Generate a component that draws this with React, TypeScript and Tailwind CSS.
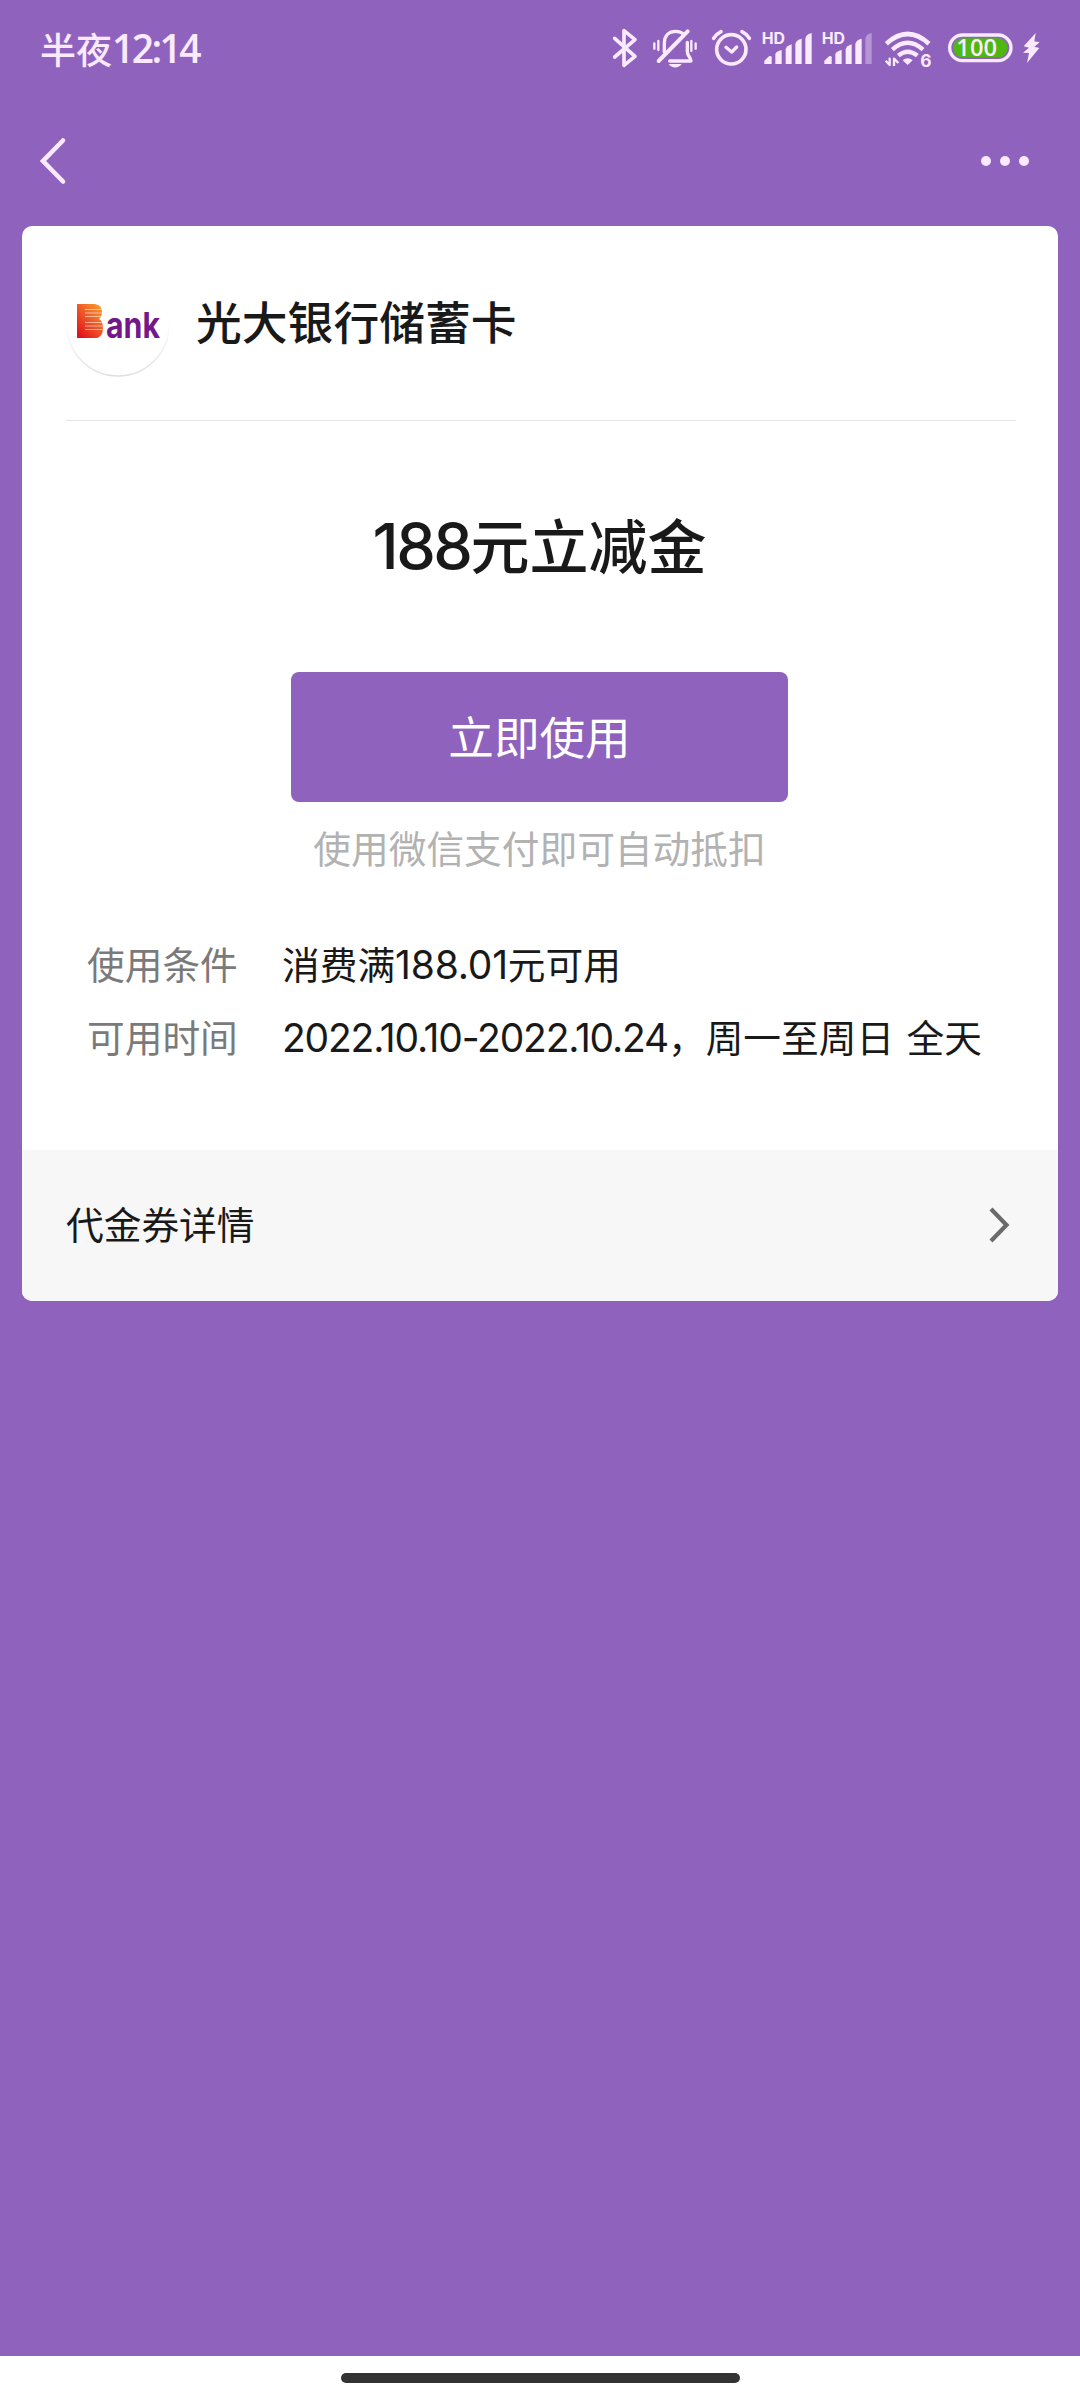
import type { ReactNode } from "react";

const INK = "#faeaff";

function StatusIcon({ x, w, children }: { x: number; w: number; children: ReactNode }) {
  return (
    <svg
      viewBox={`${x} 48 ${w} 132`}
      width={w / 3}
      height={44}
      fill="none"
      stroke={INK}
      strokeWidth={10}
      strokeLinecap="round"
      strokeLinejoin="round"
      className="shrink-0 overflow-visible"
    >
      {children}
    </svg>
  );
}

function Signal({ weak = false }: { weak?: boolean }) {
  return (
    <StatusIcon x={0} w={162}>
      <text
        x="5"
        y="101"
        fill={INK}
        stroke="none"
        fontSize="46"
        textLength="70"
        lengthAdjust="spacingAndGlyphs"
        className="font-['Inter',sans-serif] font-bold"
      >
        HD
      </text>
      <g fill={INK} stroke="none">
        <path d="M13 152l14-13q7-3 8 3v20H13z" />
        <path d="M46 132q2-8 19-12v42H46z" />
        <path d="M77 118q2-10 18-15v59H77z" />
        <path d="M106 102q2-12 19-16v76h-19z" />
        <path d="M136 86q2-13 19-17v93h-19z" opacity={weak ? 0.38 : 1} />
      </g>
    </StatusIcon>
  );
}

function StatusBar() {
  return (
    <header className="flex h-24 items-center pl-10 pr-[39px] text-[#faeaff]">
      <div className="flex items-center font-['Noto_Sans_CJK_SC',sans-serif] text-[36px] font-medium leading-[48px]">
        <span>半夜</span>
        <span className="font-['Open_Sans',sans-serif] text-[39px] font-semibold tracking-[-2.6px]">12:14</span>
      </div>
      <div className="ml-auto flex items-center">
        <StatusIcon x={60} w={90}>
          <path d="M74 85l61 54-33 27V62l33 27-61 52" strokeWidth={11} />
        </StatusIcon>
        <div className="w-2.5" />
        <StatusIcon x={180} w={150}>
          <path d="M223 127V100c0-24 14-36 34-36 12 0 20 4 26 10M292 97v28c0 12 10 17 11 28h-64" />
          <path d="M206 153l87-89" strokeWidth={12} />
          <path d="M193 100v16M205 93v27M304 93v30M317 100v16" strokeWidth={7} />
          <path d="M236 162h39c-8 14-31 14-39 0z" fill={INK} stroke="none" />
        </StatusIcon>
        <div className="w-2.5" />
        <StatusIcon x={360} w={132}>
          <circle cx="424" cy="118" r="44" strokeWidth={11} />
          <path d="M408 112l17 14 15-15" />
          <path d="M371 85q8-13 22-20M456 65q14 7 22 20" strokeWidth={11} />
        </StatusIcon>
        <div className="w-1.5" />
        <Signal />
        <div className="w-1.5" />
        <Signal weak />
        <div className="w-2.5" />
        <StatusIcon x={192} w={147}>
          <path d="M199 101q64-58 128 0" strokeWidth={14} strokeLinecap="butt" />
          <path d="M217 119q46-41 92 0" strokeWidth={13} strokeLinecap="butt" />
          <path d="M235 137q28-24 57 0" strokeWidth={13} strokeLinecap="butt" />
          <path d="M248 151q15-13 30 0l-15 14z" fill={INK} stroke="none" />
          <path d="M197 152l12 13v-22M222 168v-22l13 13" strokeWidth={7} strokeLinecap="butt" />
          <text
            x="301"
            y="170"
            fill={INK}
            stroke="none"
            fontSize="52"
            className="font-['Inter',sans-serif] font-bold"
          >
            6
          </text>
        </StatusIcon>
        <div className="w-[15px]" />
        <StatusIcon x={384} w={195}>
          <rect x="389" y="75" width="184" height="77" rx="38.5" />
          <rect x="399" y="85" width="164" height="57" rx="28.5" fill="#4fb711" stroke="none" />
          <text
            x="409"
            y="138"
            fill={INK}
            stroke="none"
            fontSize="70"
            textLength="122"
            lengthAdjust="spacingAndGlyphs"
            className="font-['Open_Sans',sans-serif] font-semibold"
          >
            100
          </text>
        </StatusIcon>
        <div className="w-2" />
        <StatusIcon x={603} w={60}>
          <path d="M647 69l-36 40 16 4-18 15 18 1-6 30 37-45-15-4 16-13-16-3z" fill={INK} stroke="none" />
        </StatusIcon>
      </div>
    </header>
  );
}

function NavBar() {
  return (
    <nav className="flex h-[130px] items-center justify-between pl-[38px] pr-[51px]">
      <svg width="30" height="50" viewBox="0 0 30 50" fill="none" stroke={INK} strokeWidth="4.6" strokeLinecap="round">
        <path d="M25 4.500L5 25l20 20.500" />
      </svg>
      <div className="flex gap-[9px]">
        <span className="size-2.5 rounded-full bg-[#faeaff]" />
        <span className="size-2.5 rounded-full bg-[#faeaff]" />
        <span className="size-2.5 rounded-full bg-[#faeaff]" />
      </div>
    </nav>
  );
}

function BankLogo() {
  return (
    <svg width="104" height="108" viewBox="0 0 104 108" className="shrink-0 overflow-visible">
      <defs>
        <linearGradient id="bank-b" x1="1" y1="0" x2="0.2" y2="1">
          <stop offset="0" stopColor="#fba52c" />
          <stop offset="0.45" stopColor="#f0632a" />
          <stop offset="1" stopColor="#e2131b" />
        </linearGradient>
        <linearGradient id="bank-ring" x1="0" y1="0" x2="0" y2="1">
          <stop offset="0.45" stopColor="#e6e6e6" stopOpacity="0" />
          <stop offset="1" stopColor="#dedede" />
        </linearGradient>
      </defs>
      <circle cx="52" cy="56" r="51" fill="none" stroke="url(#bank-ring)" strokeWidth="1.5" />
      <path d="M11 35h18q7 1 7 8 0 5-3 7 4 2 4 9 0 8-6 10H11z" fill="url(#bank-b)" />
      <path d="M19 40.500h18M19 44h19M19 47.500h18M19 53.500h17M19 57h20M19 60.500h20" stroke="#fff" strokeWidth="0.9" opacity="0.6" />
      <text
        x="40"
        y="69"
        fill="#73178b"
        fontSize="36"
        textLength="54"
        lengthAdjust="spacingAndGlyphs"
        className="font-['Inter',sans-serif] font-bold"
      >
        ank
      </text>
    </svg>
  );
}

const conditions = [
  {
    label: "使用条件",
    value: (
      <>
        消费满<span className="font-['Inter',sans-serif] text-[39px] tracking-[-0.2px]">188.01</span>元可用
      </>
    ),
  },
  {
    label: "可用时间",
    value: (
      <>
        <span className="font-['Inter',sans-serif] text-[39px] tracking-[-1.2px]">2022.10.10-2022.10.24</span>
        ，周一至周日 全天
      </>
    ),
  },
];

function Coupon() {
  return (
    <main className="mx-[22px] flex h-[1075px] flex-col overflow-hidden rounded-[10px] bg-white text-[#191919]">
      <div className="mr-[42px] ml-11 flex h-[195px] items-center gap-[26px] border-b border-[#e4e4e4]">
        <BankLogo />
        <h1 className="pb-[5px] text-[45.8px] font-medium leading-none">光大银行储蓄卡</h1>
      </div>

      <div className="flex flex-col items-center pr-px">
        <h2 className="mt-[85px] flex h-[74px] items-center text-[59px] font-medium leading-none">
          <span className="pt-1.5 font-['Inter',sans-serif] text-[63px] tracking-[-2.5px]">188</span>
          <span>元立减金</span>
        </h2>
        <button className="mt-[92px] h-[130px] w-[497px] rounded-lg bg-[#8f62be] pb-[3px] text-[45.6px] leading-none text-white">
          立即使用
        </button>
        <p className="mt-[25px] text-[37.7px] leading-[40px] text-[#b2b2b2]">使用微信支付即可自动抵扣</p>
      </div>

      <dl className="mt-[59px] px-[65px] text-[37.7px] leading-[73px]">
        {conditions.map((c) => (
          <div key={c.label} className="flex h-[73px] whitespace-nowrap">
            <dt className="w-[195px] shrink-0 text-[#7a7a7a]">{c.label}</dt>
            <dd className="[word-spacing:4px]">{c.value}</dd>
          </div>
        ))}
      </dl>

      <div className="mt-auto flex h-[151px] items-center justify-between bg-[#f7f7f7] pl-11 pr-[46px] pb-0.5 text-[37.7px] leading-none">
        <span className="pb-1">代金券详情</span>
        <svg width="26" height="40" viewBox="0 0 26 40" fill="none" stroke="#6a6a6a" strokeWidth="4.2">
          <path d="M5 4l15.500 16L5 36" />
        </svg>
      </div>
    </main>
  );
}

export default function App() {
  return (
    <div className="flex h-[2400px] w-[1080px] flex-col bg-[#8f62be] font-['Noto_Sans_CJK_SC',sans-serif]">
      <StatusBar />
      <NavBar />
      <Coupon />
      <footer className="mt-auto flex h-11 justify-center bg-white pt-[17px]">
        <div className="h-2.5 w-[399px] rounded-full bg-[#333333]" />
      </footer>
    </div>
  );
}
